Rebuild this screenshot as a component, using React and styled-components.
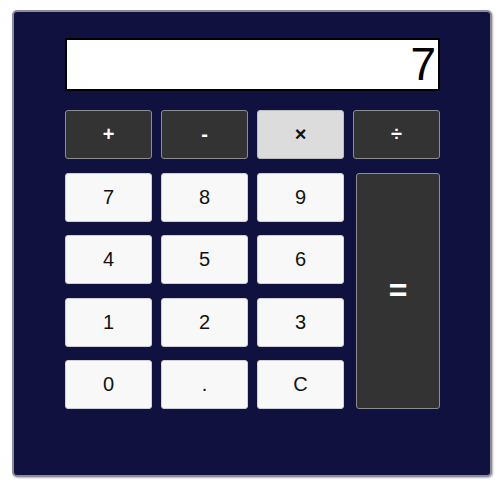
import React, { useState } from 'react';
import styled, { createGlobalStyle } from 'styled-components';

const GlobalStyle = createGlobalStyle`
  body {
    margin: 0;
    padding: 10px 12px;
    background: #ffffff;
    font-family: "Liberation Sans", Arial, sans-serif;
  }
`;

const Calculator = styled.div`
  box-sizing: border-box;
  width: 480px;
  height: 467px;
  background: #111140;
  border: 2px solid #8c8c96;
  border-radius: 5px;
  box-shadow: 1px 1px 2px rgba(0, 0, 0, 0.3);
  padding: 26px 50px 0 51px;
  display: flex;
  flex-direction: column;
  gap: 19px;
`;

const Display = styled.div`
  box-sizing: border-box;
  height: 53px;
  background: #ffffff;
  border: 2px solid #000000;
  color: #000000;
  font-size: 46px;
  line-height: 49px;
  text-align: right;
  padding-right: 2px;
  overflow: hidden;
`;

const Keys = styled.div`
  display: grid;
  grid-template-columns: repeat(4, 1fr);
  grid-auto-rows: 49px;
  column-gap: 9px;
  row-gap: 13.5px;
`;

const variants = {
  dark: { bg: '#333333', fg: '#ffffff', border: '#8d8d8d' },
  light: { bg: '#f8f8f9', fg: '#111111', border: '#cfcfd4' },
  active: { bg: '#dddcdd', fg: '#111111', border: '#bdbdbd' },
};

const Key = styled.button`
  box-sizing: border-box;
  margin: 0;
  padding: 0;
  border-radius: 3px;
  border: 1px solid ${p => variants[p.$variant].border};
  background: ${p => variants[p.$variant].bg};
  color: ${p => variants[p.$variant].fg};
  font-family: "Liberation Sans", Arial, sans-serif;
  font-size: 20px;
  font-weight: ${p => (p.$op ? 'bold' : 'normal')};
  cursor: pointer;
`;

const EqualsKey = styled(Key)`
  grid-column: 4;
  grid-row: 2 / span 4;
  margin-left: 3px;
  font-size: 32px;
  font-weight: bold;
`;

const operators = ['+', '-', '×', '÷'];
const digits = ['7', '8', '9', '4', '5', '6', '1', '2', '3', '0', '.', 'C'];

export default function App() {
  const [value, setValue] = useState('7');
  const [op, setOp] = useState('×');

  const press = (k) => {
    if (k === 'C') return setValue('0');
    setValue(v => (v === '0' ? k : v + k));
  };

  return (
    <>
      <GlobalStyle />
      <Calculator>
        <Display>{value}</Display>
        <Keys>
          {operators.map(o => (
            <Key
              key={o}
              $op
              $variant={o === op ? 'active' : 'dark'}
              onClick={() => setOp(o)}
            >
              {o}
            </Key>
          ))}
          {digits.map(d => (
            <Key key={d} $variant="light" onClick={() => press(d)}>{d}</Key>
          ))}
          <EqualsKey $variant="dark">=</EqualsKey>
        </Keys>
      </Calculator>
    </>
  );
}
